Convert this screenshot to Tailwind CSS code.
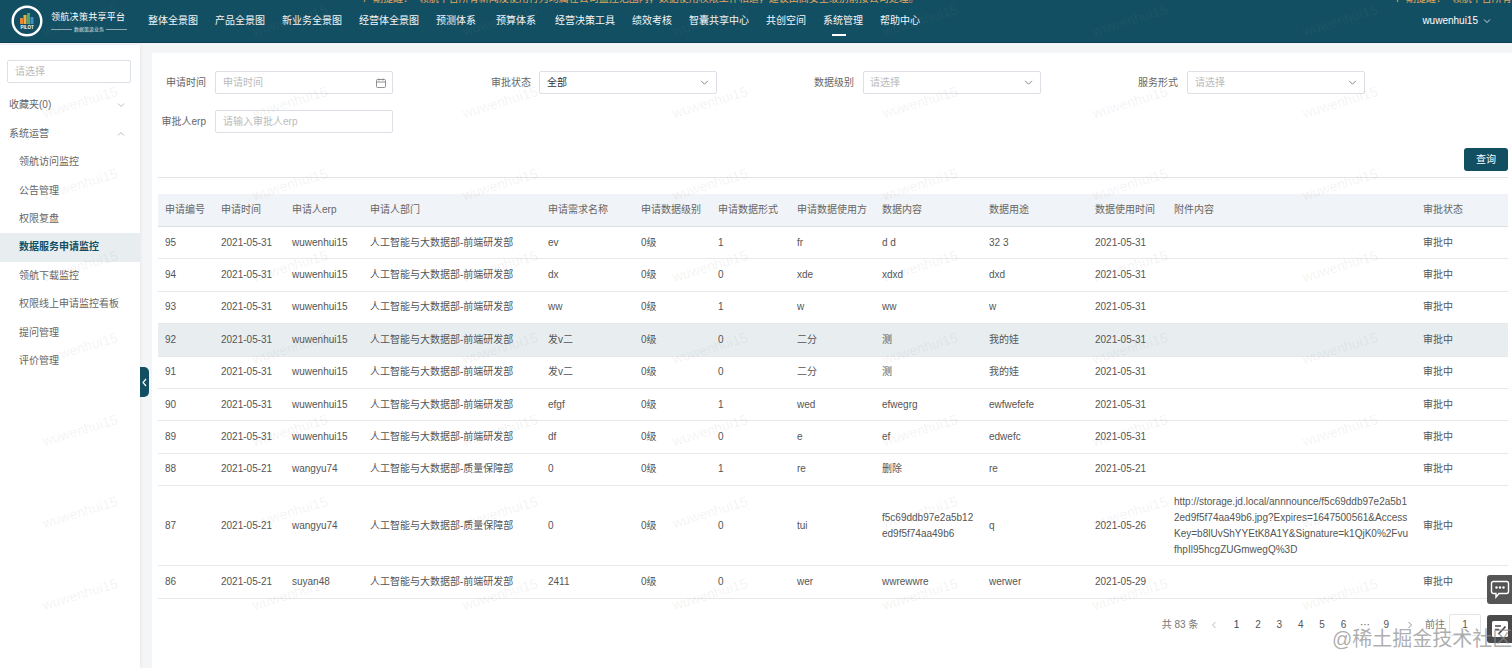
<!DOCTYPE html>
<html lang="zh-CN">
<head>
    <meta charset="UTF-8">
    <title>领航决策共享平台</title>
    <script src="https://cdn.jsdelivr.net/npm/@tailwindcss/browser@4"></script>
</head>
<body class="relative h-screen overflow-hidden flex flex-col bg-[#f4f5f6] text-[10px] leading-[16px] text-[#666] font-['Liberation_Sans','Noto_Sans_CJK_SC',sans-serif]">

    <!-- top bar -->
    <header class="relative h-[43px] shrink-0 flex items-center overflow-hidden bg-[#134f63] border-b border-[#0d4052] text-white">
        <div class="absolute top-[-6px] left-[362px] whitespace-nowrap leading-[10px] text-[#e3a75c]">7&nbsp;&nbsp;期提醒：&nbsp;&nbsp;领航平台所有新闻及使用行为均属在公司监控范围内，数据使用权限工作相适，建议由高安全级别前接公司处理。</div>
        <div class="absolute top-[-6px] left-[1395px] whitespace-nowrap leading-[10px] text-[#e3a75c]">7&nbsp;&nbsp;期提醒：&nbsp;&nbsp;领航平台所有新闻及使用行为</div>

        <div class="w-[148px] shrink-0 flex items-center pl-[11px]">
            <svg class="w-[32px] h-[32px] shrink-0" viewBox="0 0 32 32">
                <circle cx="16" cy="16" r="14.3" fill="#134f63" stroke="#fff" stroke-width="2.4"/>
                <rect x="9" y="13" width="3" height="6" fill="#e8833a"/>
                <rect x="12.5" y="10" width="3" height="9" fill="#e3b341"/>
                <rect x="16" y="8" width="3" height="11" fill="#4fa86a"/>
                <rect x="19.500" y="12" width="3" height="7" fill="#3f8fc0"/>
                <text x="16" y="23.500" text-anchor="middle" font-size="4.500" font-weight="700" fill="#fff">PILOT</text>
            </svg>
            <div class="ml-[8px] w-[76px] pt-[1px]">
                <div class="text-[9px] leading-[12px] tracking-[0.3px] whitespace-nowrap">领航决策共享平台</div>
                <div class="flex items-center gap-[2px] mt-[3px] text-[5px] leading-[6px] text-white/80 whitespace-nowrap">
                    <span class="flex-1 h-px bg-white/50"></span>数据策汲业务<span class="flex-1 h-px bg-white/50"></span>
                </div>
            </div>
        </div>

        <nav class="flex items-center gap-[17px] whitespace-nowrap text-[#f2f6f7]">
            <a>整体全景图</a>
            <a>产品全景图</a>
            <a>新业务全景图</a>
            <a>经营体全景图</a>
            <a>预测体系</a>
            <a class="ml-[3px]">预算体系</a>
            <a class="ml-[2px]">经营决策工具</a>
            <a>绩效考核</a>
            <a>智囊共享中心</a>
            <a>共创空间</a>
            <a class="relative">系统管理<span class="absolute left-[9px] top-[21px] w-[14px] h-[2px] bg-white"></span></a>
            <a>帮助中心</a>
        </nav>

        <div class="ml-auto mr-[21px] flex items-center gap-[5px]">
            <span>wuwenhui15</span>
            <svg class="w-[8px] h-[8px]" viewBox="0 0 8 8" fill="none" stroke="#fff" stroke-width="0.8"><path d="M1 2.500 4 5.500 7 2.500"/></svg>
        </div>
    </header>

    <div class="flex flex-1 min-h-0">
        <!-- left menu -->
        <aside class="relative w-[140px] shrink-0 mt-[2px] pt-[15px] bg-white shadow-[1px_0_3px_rgba(0,0,0,0.05)]">
            <div class="mx-[7px] w-[124px] h-[23px] flex items-center pl-[7px] border border-[#dcdfe6] rounded-[2px] text-[#bbb]">请选择</div>
            <ul class="mt-[8px]">
                <li class="h-[28px] flex items-center justify-between pl-[9px] pr-[15px]">收藏夹(0)
                    <svg class="w-[8px] h-[8px]" viewBox="0 0 8 8" fill="none" stroke="#aaa" stroke-width="0.8"><path d="M1 2.500 4 5.500 7 2.500"/></svg>
                </li>
                <li class="h-[29px] flex items-center justify-between pl-[9px] pr-[15px]">系统运营
                    <svg class="w-[8px] h-[8px]" viewBox="0 0 8 8" fill="none" stroke="#aaa" stroke-width="0.8"><path d="M1 5.500 4 2.500 7 5.500"/></svg>
                </li>
                <li class="h-[28.4px] flex items-center pl-[19px]">领航访问监控</li>
                <li class="h-[28.4px] flex items-center pl-[19px]">公告管理</li>
                <li class="h-[28.4px] flex items-center pl-[19px]">权限复盘</li>
                <li class="h-[28.4px] flex items-center pl-[19px] bg-[#e8eef0] text-[#134f63] font-bold">数据服务申请监控</li>
                <li class="h-[28.4px] flex items-center pl-[19px]">领航下载监控</li>
                <li class="h-[28.4px] flex items-center pl-[19px]">权限线上申请监控看板</li>
                <li class="h-[28.4px] flex items-center pl-[19px]">提问管理</li>
                <li class="h-[28.4px] flex items-center pl-[19px]">评价管理</li>
            </ul>
            <div class="absolute left-full top-[322px] w-[9px] h-[30px] flex items-center justify-center bg-[#134f63] rounded-r-[5px]">
                <svg class="w-[7px] h-[9px]" viewBox="0 0 7 9" fill="none" stroke="#fff" stroke-width="1.200"><path d="M5 1 2 4.500 5 8"/></svg>
            </div>
        </aside>

        <!-- content -->
        <main class="flex-1 min-w-0 ml-[12px] mt-[10px] pt-[18px] bg-white">
            <div class="grid grid-cols-[241px_324px_324px_324px] gap-y-[16px]">
                <div class="flex items-center justify-end gap-[9px]">
                    <label>申请时间</label>
                    <div class="w-[178px] h-[23px] flex items-center justify-between pl-[7px] pr-[6px] border border-[#dcdfe6] rounded-[2px] text-[#bbb]">申请时间
                        <svg class="w-[10px] h-[10px]" viewBox="0 0 10 10" fill="none" stroke="#777" stroke-width="0.8"><rect x="0.500" y="1.500" width="9" height="8" rx="1"/><path d="M0.500 4H9.500M3 0.500V2.500M7 0.500V2.500"/></svg>
                    </div>
                </div>
                <div class="flex items-center justify-end gap-[8px]">
                    <label>审批状态</label>
                    <div class="w-[178px] h-[23px] flex items-center justify-between pl-[7px] pr-[7px] border border-[#dcdfe6] rounded-[2px] text-[#333]">全部
                        <svg class="w-[9px] h-[9px]" viewBox="0 0 8 8" fill="none" stroke="#777" stroke-width="0.8"><path d="M1 2.500 4 5.500 7 2.500"/></svg>
                    </div>
                </div>
                <div class="flex items-center justify-end gap-[9px]">
                    <label>数据级别</label>
                    <div class="w-[178px] h-[23px] flex items-center justify-between pl-[6px] pr-[7px] border border-[#dcdfe6] rounded-[2px] text-[#bbb]">请选择
                        <svg class="w-[9px] h-[9px]" viewBox="0 0 8 8" fill="none" stroke="#777" stroke-width="0.8"><path d="M1 2.500 4 5.500 7 2.500"/></svg>
                    </div>
                </div>
                <div class="flex items-center justify-end gap-[9px]">
                    <label>服务形式</label>
                    <div class="w-[178px] h-[23px] flex items-center justify-between pl-[7px] pr-[7px] border border-[#dcdfe6] rounded-[2px] text-[#bbb]">请选择
                        <svg class="w-[9px] h-[9px]" viewBox="0 0 8 8" fill="none" stroke="#777" stroke-width="0.8"><path d="M1 2.500 4 5.500 7 2.500"/></svg>
                    </div>
                </div>
                <div class="flex items-center justify-end gap-[9px]">
                    <label>审批人erp</label>
                    <div class="w-[178px] h-[23px] flex items-center pl-[7px] border border-[#dcdfe6] rounded-[2px] text-[#bbb]">请输入审批人erp</div>
                </div>
            </div>

            <div class="flex justify-end mt-[15px] pr-[4px]">
                <button class="w-[44px] h-[23px] bg-[#134f63] rounded-[3px] text-white">查询</button>
            </div>
            <div class="h-px ml-[6px] mr-[4px] mt-[6px] bg-[#e2e4e6]"></div>

            <table class="mt-[16px] ml-[6px] w-[1350px] table-fixed border-collapse text-left [&_td]:pl-[7px] [&_th]:pl-[7px] [&_td]:border-b [&_td]:border-[#e6e8ea] [&_td]:text-[#555]">
                <colgroup>
                    <col class="w-[56px]"><col class="w-[71px]"><col class="w-[78px]"><col class="w-[178px]"><col class="w-[93px]"><col class="w-[77px]"><col class="w-[79px]"><col class="w-[85px]"><col class="w-[107px]"><col class="w-[106px]"><col class="w-[79px]"><col class="w-[249px]"><col class="w-[92px]">
                </colgroup>
                <thead>
                    <tr class="h-[32.5px] bg-[#f0f3f7] [&_th]:font-normal [&_th]:text-[#666] [&_th]:border-b [&_th]:border-[#dcdfe6]">
                        <th>申请编号</th><th>申请时间</th><th>申请人erp</th><th>申请人部门</th><th>申请需求名称</th><th>申请数据级别</th><th>申请数据形式</th><th>申请数据使用方</th><th>数据内容</th><th>数据用途</th><th>数据使用时间</th><th>附件内容</th><th>审批状态</th>
                    </tr>
                </thead>
                <tbody>
                    <tr class="h-[32.4px]"><td>95</td><td>2021-05-31</td><td>wuwenhui15</td><td>人工智能与大数据部-前端研发部</td><td>ev</td><td>0级</td><td>1</td><td>fr</td><td>d d</td><td>32 3</td><td>2021-05-31</td><td></td><td>审批中</td></tr>
                    <tr class="h-[32.4px]"><td>94</td><td>2021-05-31</td><td>wuwenhui15</td><td>人工智能与大数据部-前端研发部</td><td>dx</td><td>0级</td><td>0</td><td>xde</td><td>xdxd</td><td>dxd</td><td>2021-05-31</td><td></td><td>审批中</td></tr>
                    <tr class="h-[32.4px]"><td>93</td><td>2021-05-31</td><td>wuwenhui15</td><td>人工智能与大数据部-前端研发部</td><td>ww</td><td>0级</td><td>1</td><td>w</td><td>ww</td><td>w</td><td>2021-05-31</td><td></td><td>审批中</td></tr>
                    <tr class="h-[32.4px] bg-[#e8eef0]"><td>92</td><td>2021-05-31</td><td>wuwenhui15</td><td>人工智能与大数据部-前端研发部</td><td>发v二</td><td>0级</td><td>0</td><td>二分</td><td>测</td><td>我的娃</td><td>2021-05-31</td><td></td><td>审批中</td></tr>
                    <tr class="h-[32.4px]"><td>91</td><td>2021-05-31</td><td>wuwenhui15</td><td>人工智能与大数据部-前端研发部</td><td>发v二</td><td>0级</td><td>0</td><td>二分</td><td>测</td><td>我的娃</td><td>2021-05-31</td><td></td><td>审批中</td></tr>
                    <tr class="h-[32.4px]"><td>90</td><td>2021-05-31</td><td>wuwenhui15</td><td>人工智能与大数据部-前端研发部</td><td>efgf</td><td>0级</td><td>1</td><td>wed</td><td>efwegrg</td><td>ewfwefefe</td><td>2021-05-31</td><td></td><td>审批中</td></tr>
                    <tr class="h-[32.4px]"><td>89</td><td>2021-05-31</td><td>wuwenhui15</td><td>人工智能与大数据部-前端研发部</td><td>df</td><td>0级</td><td>0</td><td>e</td><td>ef</td><td>edwefc</td><td>2021-05-31</td><td></td><td>审批中</td></tr>
                    <tr class="h-[32.4px]"><td>88</td><td>2021-05-21</td><td>wangyu74</td><td>人工智能与大数据部-质量保障部</td><td>0</td><td>0级</td><td>1</td><td>re</td><td>删除</td><td>re</td><td>2021-05-21</td><td></td><td>审批中</td></tr>
                    <tr class="h-[80px]"><td>87</td><td>2021-05-21</td><td>wangyu74</td><td>人工智能与大数据部-质量保障部</td><td>0</td><td>0级</td><td>0</td><td>tui</td><td>f5c69ddb97e2a5b12<br>ed9f5f74aa49b6</td><td>q</td><td>2021-05-26</td><td>http://storage.jd.local/annnounce/f5c69ddb97e2a5b1<br>2ed9f5f74aa49b6.jpg?Expires=1647500561&amp;Access<br>Key=b8lUvShYYEtK8A1Y&amp;Signature=k1QjK0%2Fvu<br>fhpIl95hcgZUGmwegQ%3D</td><td>审批中</td></tr>
                    <tr class="h-[32.4px]"><td>86</td><td>2021-05-21</td><td>suyan48</td><td>人工智能与大数据部-前端研发部</td><td>2411</td><td>0级</td><td>0</td><td>wer</td><td>wwrewwre</td><td>werwer</td><td>2021-05-29</td><td></td><td>审批中</td></tr>
                </tbody>
            </table>

            <!-- pagination -->
            <div class="flex items-center justify-end h-[22px] mt-[15px] pr-[15px] text-[#777]">
                <span>共 83 条</span>
                <span class="ml-[13px] w-[7px]"><svg class="w-[6px] h-[8px]" viewBox="0 0 6 8" fill="none" stroke="#aaa" stroke-width="0.8"><path d="M4.500 1 1.500 4 4.500 7"/></svg></span>
                <ul class="flex ml-[7.5px] text-center text-[#555]">
                    <li class="w-[21.4px] text-[#134f63]">1</li>
                    <li class="w-[21.4px]">2</li>
                    <li class="w-[21.4px]">3</li>
                    <li class="w-[21.4px]">4</li>
                    <li class="w-[21.4px]">5</li>
                    <li class="w-[21.4px]">6</li>
                    <li class="w-[21.4px]">···</li>
                    <li class="w-[21.4px]">9</li>
                </ul>
                <span class="ml-[10px] w-[8px]"><svg class="w-[6px] h-[8px]" viewBox="0 0 6 8" fill="none" stroke="#777" stroke-width="0.8"><path d="M1.500 1 4.500 4 1.500 7"/></svg></span>
                <span class="ml-[10px]">前往</span>
                <span class="ml-[4px] w-[32px] h-[22px] flex items-center justify-center border border-[#e2e4e6] rounded-[2px] text-[#555]">1</span>
                <span class="ml-[6px]">页</span>
            </div>
        </main>
    </div>

    <!-- repeated user name watermark -->
    <div id="watermarks" class="absolute left-[-25px] top-[-21px] z-10 pointer-events-none grid grid-cols-[repeat(7,210px)] auto-rows-[82px]"></div>

    <!-- side buttons -->
    <div class="absolute z-20 right-0 top-[575px] w-[25px] h-[29px] flex items-center justify-center bg-[#555] rounded-l-[3px]">
        <svg class="w-[20px] h-[19px]" viewBox="0 0 20 19" fill="none"><path d="M3.500 1.500H16.500A2 2 0 0 1 18.500 3.500V11.500A2 2 0 0 1 16.500 13.500H9L6 17V13.500H3.500A2 2 0 0 1 1.500 11.500V3.500A2 2 0 0 1 3.500 1.500Z" stroke="#fff" stroke-width="1.400"/><circle cx="6.500" cy="7.500" r="1.200" fill="#fff"/><circle cx="10" cy="7.500" r="1.200" fill="#fff"/><circle cx="13.500" cy="7.500" r="1.200" fill="#fff"/></svg>
    </div>
    <div class="absolute z-20 right-0 top-[615px] w-[25px] h-[28px] flex items-center justify-center bg-[#4a4a4a] rounded-l-[3px]">
        <svg class="w-[16px] h-[16px]" viewBox="0 0 16 16"><rect width="16" height="16" rx="1.500" fill="#fff"/><path d="M3 5H9M3 8.500H7" stroke="#4a4a4a" stroke-width="1.300"/><path d="M6.500 13 13.500 5.500" stroke="#4a4a4a" stroke-width="1.800"/></svg>
    </div>

    <!-- site stamp -->
    <div class="absolute z-30 left-[1332px] top-[625px] leading-[28px] text-[20px] whitespace-nowrap text-[#8a8a8a]/70 pointer-events-none">@稀土掘金技术社区</div>

    <script>
        const marks = document.getElementById('watermarks');
        for (let i = 0; i < 56; i++) {
            const cell = document.createElement('div');
            cell.className = 'flex items-center justify-center';
            const name = document.createElement('span');
            name.className = 'block -rotate-[17deg] text-[14px] leading-[16px] text-[#808080]/10';
            name.textContent = 'wuwenhui15';
            cell.appendChild(name);
            marks.appendChild(cell);
        }
    </script>
</body>
</html>
